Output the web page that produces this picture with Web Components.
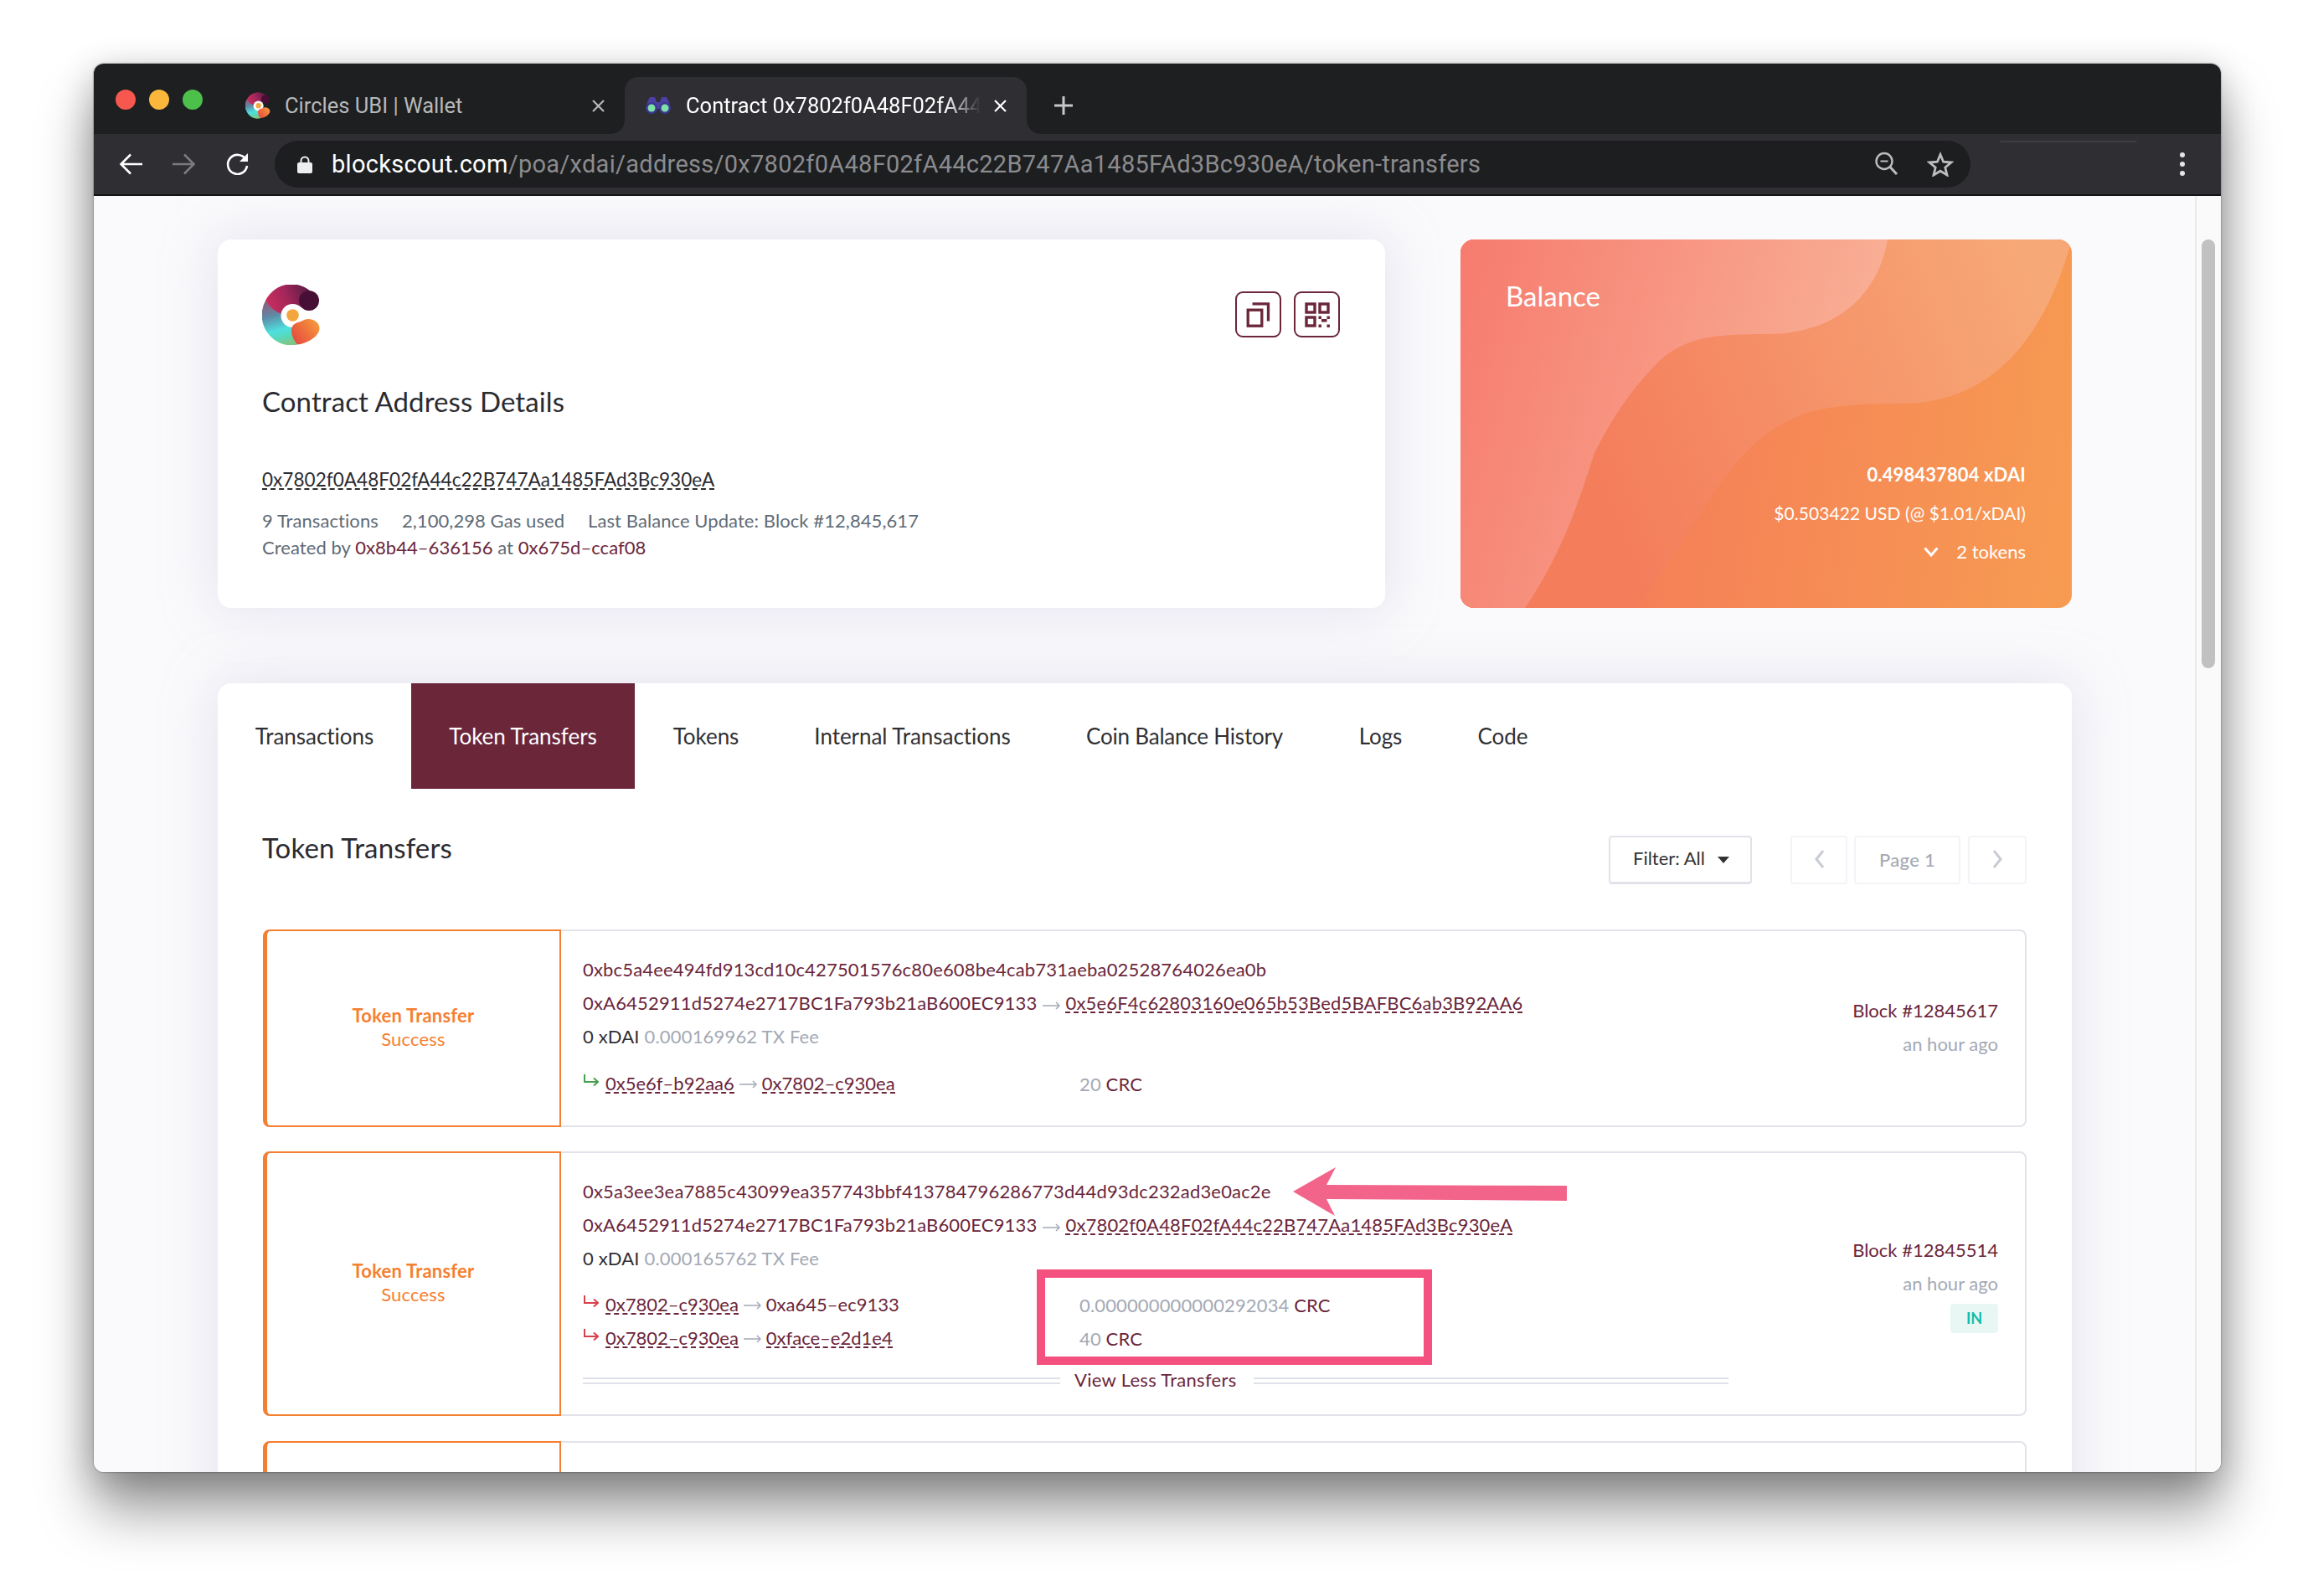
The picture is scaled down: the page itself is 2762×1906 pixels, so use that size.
<!doctype html>
<html>
<head>
<meta charset="utf-8">
<title>Contract details</title>
<style>
  html, body { margin: 0; background: #fff; }
  body {
    width: 2762px;
    height: 1906px;
    box-sizing: border-box;
    padding: 76px 0 0 112px;
    overflow: hidden;
    font: 22px Lato, "Noto Sans", sans-serif;
    color: #333;
  }
</style>
</head>
<body>
<browser-window>
  <browser-tab slot="tabs">
    <circles-logo slot="icon" style="width:30px;height:32px"></circles-logo>
    Circles UBI | Wallet
  </browser-tab>
  <browser-tab slot="tabs" active>
    <binoculars-icon slot="icon"></binoculars-icon>
    Contract 0x7802f0A48F02fA44c22B747Aa1485FAd3Bc930eA
  </browser-tab>

  <address-card></address-card>
  <balance-card></balance-card>

  <transfers-panel slot="panel">
    <transfer-row block="Block #12845617" age="an hour ago">
      <tx-line><x-link>0xbc5a4ee494fd913cd10c427501576c80e608be4cab731aeba02528764026ea0b</x-link></tx-line>
      <tx-line><x-link>0xA6452911d5274e2717BC1Fa793b21aB600EC9133</x-link><x-arrow wide></x-arrow><x-link dashed>0x5e6F4c62803160e065b53Bed5BAFBC6ab3B92AA6</x-link></tx-line>
      <tx-line>0 xDAI <x-muted>0.000169962 TX Fee</x-muted></tx-line>
      <token-line dir="in" first>
        <x-link dashed>0x5e6f–b92aa6</x-link><x-arrow></x-arrow><x-link dashed>0x7802–c930ea</x-link>
        <span slot="amount"><x-muted>20</x-muted> <x-link>CRC</x-link></span>
      </token-line>
    </transfer-row>

    <transfer-row class="open" block="Block #12845514" age="an hour ago" badge="IN">
      <tx-line><x-link>0x5a3ee3ea7885c43099ea357743bbf413784796286773d44d93dc232ad3e0ac2e</x-link></tx-line>
      <tx-line><x-link>0xA6452911d5274e2717BC1Fa793b21aB600EC9133</x-link><x-arrow wide></x-arrow><x-link dashed>0x7802f0A48F02fA44c22B747Aa1485FAd3Bc930eA</x-link></tx-line>
      <tx-line>0 xDAI <x-muted>0.000165762 TX Fee</x-muted></tx-line>
      <token-line dir="out" first style="margin-top:15px">
        <x-link dashed>0x7802–c930ea</x-link><x-arrow></x-arrow><x-link>0xa645–ec9133</x-link>
        <span slot="amount"><x-muted>0.000000000000292034</x-muted> <x-link>CRC</x-link></span>
      </token-line>
      <token-line dir="out">
        <x-link dashed>0x7802–c930ea</x-link><x-arrow></x-arrow><x-link dashed>0xface–e2d1e4</x-link>
        <span slot="amount"><x-muted>40</x-muted> <x-link>CRC</x-link></span>
      </token-line>
      <view-less></view-less>
    </transfer-row>

    <transfer-row></transfer-row>
  </transfers-panel>

  <pink-marks slot="marks"></pink-marks>
</browser-window>

<script>
const MAROON = '#6b263a';

function tpl(html) {
  const t = document.createElement('template');
  t.innerHTML = html;
  return t;
}

class Base extends HTMLElement {
  constructor() {
    super();
    this.attachShadow({ mode: 'open' });
    this.shadowRoot.appendChild(this.constructor.template.content.cloneNode(true));
  }
}

class BrowserWindow extends Base {
  static template = tpl(`
    <style>
      :host {
        display: block;
        position: relative;
        width: 2540px;
        height: 1682px;
        border-radius: 12px;
        box-shadow: 0 46px 66px rgba(0,0,0,.4), 0 8px 40px rgba(0,0,0,.22), 0 0 2px rgba(0,0,0,.6);
      }
      .frame {
        display: flex;
        flex-direction: column;
        height: 100%;
        border-radius: 12px;
        overflow: hidden;
        font-family: Roboto, "Liberation Sans", sans-serif;
      }
      .strip { display: flex; height: 84px; flex: none; background: #1e1f21; }
      .lights { display: flex; gap: 16px; padding: 31px 0 0 26px; width: 168px; box-sizing: border-box; }
      .lights i { width: 24px; height: 24px; border-radius: 50%; }
      .tabs { display: flex; align-items: flex-end; }
      .plus { align-self: flex-end; height: 68px; width: 88px; display: flex; align-items: center; justify-content: center; }
      .bar {
        display: flex; flex: none; height: 72px; align-items: center;
        background: #2f2e33; border-bottom: 2px solid #141416;
        padding-left: 12px;
      }
      .nav { width: 64px; display: flex; justify-content: center; }
      .omni {
        display: flex; align-items: center; width: 2025px; height: 56px; margin-left: 12px;
        box-sizing: border-box; padding-left: 27px;
        border-radius: 28px; background: #1d1e20;
        font-size: 29px; letter-spacing: .28px; color: #8b8b8e; white-space: nowrap;
      }
      .omni b { font-weight: 400; color: #fff; }
      .omni .url { margin-left: 23px; flex: 1; }
      .omni svg.z { margin-right: 33px; }
      .omni svg.s { margin-right: 20px; }
      .sliver { align-self: flex-start; width: 164px; height: 2px; margin: 8px 0 0 35px; background: #3d3d42; border-radius: 2px 2px 0 0; }
      .dots { margin-left: 51px; display: flex; flex-direction: column; gap: 5px; }
      .dots i { width: 6px; height: 6px; border-radius: 50%; background: #e6e6e6; }
      .view { flex: 1; display: flex; min-height: 0; background: #fafafc; }
      main { flex: 1; min-width: 0; padding: 52px 0 0 148px; overflow: hidden; font-family: Lato, "Noto Sans", sans-serif; }
      .top { display: flex; gap: 90px; }
      .scroll { flex: none; width: 31px; box-sizing: border-box; border-left: 2px solid #e9e9eb; background: #fafafa; padding: 52px 0 0 6px; }
      .thumb { width: 16px; height: 512px; border-radius: 8px; background: #c1c1c1; }
    </style>
    <div class="frame">
      <div class="strip">
        <div class="lights">
          <i style="background:#f6584f"></i><i style="background:#fbb63c"></i><i style="background:#4cc04a"></i>
        </div>
        <div class="tabs"><slot name="tabs"></slot></div>
        <div class="plus">
          <svg width="24" height="24" viewBox="0 0 24 24"><path d="M12 1V23M1 12H23" stroke="#c8c8ca" stroke-width="3"/></svg>
        </div>
      </div>
      <div class="bar">
        <div class="nav"><svg width="28" height="26" viewBox="0 0 28 26" fill="none" stroke="#fff" stroke-width="2.6"><path d="M28 13H3M14 1.5L2.5 13L14 24.5"/></svg></div>
        <div class="nav"><svg width="28" height="26" viewBox="0 0 28 26" fill="none" stroke="#7b7b7e" stroke-width="2.6"><path d="M0 13H25M14 1.5L25.5 13L14 24.5"/></svg></div>
        <div class="nav"><svg width="28" height="26" viewBox="0 0 28 26" fill="none"><path d="M23.5 7.5A11.5 11.5 0 1 0 25 15" stroke="#fff" stroke-width="2.6"/><path d="M26 0V10H16Z" fill="#fff"/></svg></div>
        <div class="omni">
          <svg width="18" height="21" viewBox="0 0 18 21"><path d="M4.5 9V6a4.5 4.5 0 0 1 9 0V9" fill="none" stroke="#eee" stroke-width="2"/><rect y="8" width="18" height="13" rx="2" fill="#eee"/></svg>
          <span class="url"><b>blockscout.com</b>/poa/xdai/address/0x7802f0A48F02fA44c22B747Aa1485FAd3Bc930eA/token-transfers</span>
          <svg class="z" width="30" height="30" viewBox="0 0 30 30" fill="none" stroke="#bdbdbd"><circle cx="12" cy="11.5" r="9.5" stroke-width="2.4"/><path d="M7.5 11.5H16.5" stroke-width="2"/><path d="M19 18.5L27 27" stroke-width="3"/></svg>
          <svg class="s" width="32" height="30" viewBox="0 0 32 30" fill="none" stroke="#bdbdbd" stroke-width="2.8"><path d="M16 3.5L19.6 12.2L29 13L21.8 19L24 28L16 23.2L8 28L10.2 19L3 13L12.4 12.2Z" stroke-linejoin="miter"/></svg>
        </div>
        <div class="sliver"></div>
        <div class="dots"><i></i><i></i><i></i></div>
      </div>
      <div class="view">
        <main>
          <div class="top"><slot></slot></div>
          <slot name="panel"></slot>
        </main>
        <div class="scroll"><div class="thumb"></div></div>
      </div>
    </div>
    <slot name="marks"></slot>
  `);
}

class BrowserTab extends Base {
  static template = tpl(`
    <style>
      :host {
        display: flex; align-items: center; position: relative;
        width: 466px; height: 68px; box-sizing: border-box; padding-left: 13px;
        font-size: 25.5px; color: #b7b8ba; white-space: nowrap;
      }
      :host([active]) {
        width: 480px; padding-left: 24px; color: #fff; background: #2f2e33;
        border-radius: 16px 16px 0 0;
      }
      :host([active])::before, :host([active])::after {
        content: ""; position: absolute; bottom: 0; width: 16px; height: 16px;
      }
      :host([active])::before { left: -16px; background: radial-gradient(circle at 0 0, transparent 15.5px, #2f2e33 16px); }
      :host([active])::after { right: -16px; background: radial-gradient(circle at 100% 0, transparent 15.5px, #2f2e33 16px); }
      .text { flex: 1; min-width: 0; overflow: hidden; margin-left: 17px; }
      :host([active]) .text { -webkit-mask-image: linear-gradient(to right, #000 88%, transparent 100%); mask-image: linear-gradient(to right, #000 88%, transparent 100%); }
      svg { flex: none; margin: 0 24px 0 16px; }
    </style>
    <slot name="icon"></slot>
    <div class="text"><slot></slot></div>
    <svg width="15" height="15" viewBox="0 0 15 15"><path d="M1 1L14 14M14 1L1 14" stroke="currentColor" stroke-width="2.2"/></svg>
  `);
}

class CirclesLogo extends Base {
  static template = tpl(`
    <style>:host { display: block; flex: none; width: 70px; height: 72px; } svg { display: block; width: 100%; height: 100%; }</style>
    <svg viewBox="0 0 70 72">
      <defs>
        <linearGradient id="mg" x1="4" y1="26" x2="62" y2="4" gradientUnits="userSpaceOnUse">
          <stop offset="0" stop-color="#cf2f5f"/><stop offset=".45" stop-color="#a3265a"/><stop offset="1" stop-color="#46193f"/>
        </linearGradient>
        <linearGradient id="tl" x1="8" y1="22" x2="22" y2="72" gradientUnits="userSpaceOnUse">
          <stop offset="0" stop-color="#8c5f83"/><stop offset=".3" stop-color="#5e8aa6"/><stop offset=".66" stop-color="#4ee0df"/><stop offset=".84" stop-color="#58d8bb"/><stop offset="1" stop-color="#7cc887"/>
        </linearGradient>
        <linearGradient id="or" x1="36" y1="66" x2="66" y2="44" gradientUnits="userSpaceOnUse">
          <stop offset="0" stop-color="#e6493e"/><stop offset="1" stop-color="#f6993c"/>
        </linearGradient>
      </defs>
      <path d="M4.5 18A35 36 0 0 0 42 71.500L44 50L34 34Z" fill="url(#tl)"/>
      <path d="M4.5 18A35 36 0 0 1 60 10L56 30L44 26L32 37C20 35 10 30 4.5 18Z" fill="url(#mg)"/>
      <circle cx="56" cy="19" r="12" fill="#470f35"/>
      <circle cx="36.5" cy="37" r="14" fill="#fff"/>
      <circle cx="36.5" cy="36.5" r="7.3" fill="#f3a53e"/>
      <path d="M35 54C35 47 42 45 46 44C50 42 52 41 55 41C63 41 69 46 68.500 53C67 62 55 70 42 71.500C38 66 35 61 35 54Z" fill="url(#or)"/>
    </svg>
  `);
}

class BinocularsIcon extends Base {
  static template = tpl(`
    <style>:host { display: block; flex: none; width: 32px; height: 20px; } svg { display: block; }</style>
    <svg width="32" height="20" viewBox="0 0 32 20">
      <path d="M3 6L6 0H12L14 6H18L20 0H26L29 6L31 14H1Z" fill="#4d3fa6"/>
      <circle cx="8" cy="13" r="7" fill="#39388f"/><circle cx="24" cy="13" r="7" fill="#39388f"/>
      <circle cx="8" cy="13" r="4.500" fill="#7fe0a8"/><circle cx="24" cy="13" r="4.500" fill="#7fe0a8"/>
    </svg>
  `);
}

class IconButton extends Base {
  static template = tpl(`
    <style>
      :host {
        display: flex; align-items: center; justify-content: center; flex: none;
        width: 55px; height: 55px; box-sizing: border-box;
        border: 2px solid ${MAROON}; border-radius: 9px; color: ${MAROON};
      }
    </style>
    <slot></slot>
  `);
}

class AddressCard extends Base {
  static template = tpl(`
    <style>
      :host {
        display: block; flex: none; width: 1394px; height: 440px; box-sizing: border-box;
        padding: 54px 53px 0; border-radius: 16px; background: #fff;
        box-shadow: 0 0 60px rgba(202,199,226,.5);
      }
      .head { display: flex; justify-content: space-between; height: 72px; }
      .btns { display: flex; gap: 15px; padding: 8px 1px 0 0; }
      h1 { margin: 47px 0 0; font-weight: 400; font-size: 33px; line-height: 40px; letter-spacing: .1px; color: #2b2b30; }
      .addr {
        display: inline-block; margin-top: 64px; font-size: 22.500px; letter-spacing: .05px; line-height: 20px; color: #2b2b30;
        border-bottom: 2px dashed #2b2b30;
      }
      .stats { display: flex; gap: 28px; margin-top: 20px; line-height: 32px; letter-spacing: .08px; color: #5f6b76; }
      .created { line-height: 32px; letter-spacing: .06px; color: #5f6b76; }
      a { color: ${MAROON}; text-decoration: none; }
      svg { display: block; }
    </style>
    <div class="head">
      <circles-logo></circles-logo>
      <div class="btns">
        <icon-button>
          <svg width="32" height="32" viewBox="0 0 32 32" fill="none" stroke="${MAROON}" stroke-width="3.300"><rect x="3.200" y="10.200" width="16.600" height="19"/><path d="M8.500 2.900H27.500V23.500"/></svg>
        </icon-button>
        <icon-button>
          <svg width="30" height="30" viewBox="0 0 30 30" fill="none" stroke="${MAROON}" stroke-width="3.400">
            <rect x="2" y="2" width="10" height="10"/><rect x="18" y="2" width="10" height="10"/><rect x="2" y="18" width="10" height="10"/>
            <path d="M16.500 16.500h3.400v3.400h-3.400zM26.500 16.500h3.400v3.400h-3.400zM20 20h6.500v3.400H20zM16.500 26.500h3.400v3.400h-3.400zM26.500 26.500h3.400v3.400h-3.400z" fill="${MAROON}" stroke="none"/>
          </svg>
        </icon-button>
      </div>
    </div>
    <h1>Contract Address Details</h1>
    <div class="addr">0x7802f0A48F02fA44c22B747Aa1485FAd3Bc930eA</div>
    <div class="stats"><span>9 Transactions</span><span>2,100,298 Gas used</span><span>Last Balance Update: Block #12,845,617</span></div>
    <div class="created">Created by <a>0x8b44–636156</a> at <a>0x675d–ccaf08</a></div>
  `);
}

class BalanceCard extends Base {
  static template = tpl(`
    <style>
      :host {
        display: flex; flex-direction: column; justify-content: space-between; flex: none; position: relative;
        width: 730px; height: 440px; box-sizing: border-box; padding: 47px 55px 44px;
        border-radius: 16px; overflow: hidden; color: #fff;
      }
      .bg { position: absolute; inset: 0; z-index: 0; }
      .title, .right { position: relative; }
      .title { font-size: 33px; line-height: 40px; margin-left: -1px; }
      .right { text-align: right; line-height: 46px; }
      .sum { font-weight: 700; letter-spacing: .12px; }
      .usd { font-size: 21px; letter-spacing: .06px; }
      .tok { display: flex; justify-content: flex-end; align-items: center; gap: 21px; }
    </style>
    <svg class="bg" width="730" height="440" viewBox="0 0 730 440">
      <defs>
        <linearGradient id="c" x1="200" y1="300" x2="730" y2="380" gradientUnits="userSpaceOnUse"><stop offset="0" stop-color="#f57e58"/><stop offset="1" stop-color="#f79b52"/></linearGradient>
        <linearGradient id="b" x1="170" y1="300" x2="700" y2="100" gradientUnits="userSpaceOnUse"><stop offset="0" stop-color="#f47d5c"/><stop offset="1" stop-color="#f7a877"/></linearGradient>
        <linearGradient id="a" x1="0" y1="0" x2="510" y2="150" gradientUnits="userSpaceOnUse"><stop offset="0" stop-color="#f67b6e"/><stop offset="1" stop-color="#f9b297"/></linearGradient>
      </defs>
      <rect width="730" height="440" fill="url(#c)"/>
      <path d="M0 0H730C700 110 640 196 526 196C480 196 445 198 414 207C370 222 340 250 315 285C280 335 243 395 213 440H0Z" fill="url(#b)"/>
      <path d="M0 0H510C500 60 455 113 365 113C300 113 262 116 228 155C195 190 175 225 160 255C145 300 125 370 77 440H0Z" fill="url(#a)"/>
    </svg>
    <div class="title">Balance</div>
    <div class="right">
      <div class="sum">0.498437804 xDAI</div>
      <div class="usd">$0.503422 USD (@ $1.01/xDAI)</div>
      <div class="tok">
        <svg width="18" height="12" viewBox="0 0 18 12" fill="none" stroke="#fff" stroke-width="3"><path d="M1.500 1.500L9 10L16.500 1.500"/></svg>
        <span>2 tokens</span>
      </div>
    </div>
  `);
}

class TransfersPanel extends Base {
  static template = tpl(`
    <style>
      :host {
        display: block; width: 2214px; margin-top: 90px; padding: 0 54px;
        box-sizing: border-box; border-radius: 16px 16px 0 0; background: #fff;
        box-shadow: 0 0 60px rgba(202,199,226,.5);
      }
      nav { display: flex; height: 126px; margin: 0 -54px; }
      .head { display: flex; justify-content: space-between; height: 58px; margin-top: 56px; }
      h2 { margin: -1px 0 0 -1px; font-weight: 400; font-size: 33px; line-height: 30px; letter-spacing: .15px; color: #2b2b30; }
      .tools { display: flex; font-size: 22px; }
      .filter {
        display: flex; align-items: center; gap: 15px; width: 171px; box-sizing: border-box; padding: 0 0 4px 27px;
        border: 2px solid #e2e2ea; border-bottom-width: 3px; border-radius: 4px; margin-right: 46px; color: #333;
      }
      .filter i { width: 0; height: 0; border: 7px solid transparent; border-top: 8px solid #333; border-bottom: 0; margin-top: 5px; }
      .pg {
        display: flex; align-items: center; justify-content: center; box-sizing: border-box; padding-bottom: 2px;
        border: 2px solid #f3f3f8; border-radius: 4px; color: #a3a9b5; font-weight: 500; letter-spacing: .3px;
      }
      .rows { margin-top: 54px; }
    </style>
    <nav>
      <tab-item style="width:231px">Transactions</tab-item>
      <tab-item style="width:267px;margin-left:0" active>Token Transfers</tab-item>
      <tab-item style="width:170px">Tokens</tab-item>
      <tab-item style="width:323px">Internal Transactions</tab-item>
      <tab-item style="width:327px;letter-spacing:-.2px">Coin Balance History</tab-item>
      <tab-item style="width:141px">Logs</tab-item>
      <tab-item style="width:151px">Code</tab-item>
    </nav>
    <div class="head">
      <h2>Token Transfers</h2>
      <div class="tools">
        <div class="filter">Filter: All <i></i></div>
        <div class="pg" style="width:68px;margin-right:8px">
          <svg width="13" height="24" viewBox="0 0 13 24" fill="none" stroke="#c8ccd4" stroke-width="3"><path d="M11 2L3 12L11 22"/></svg>
        </div>
        <div class="pg" style="width:127px;margin-right:9px">Page 1</div>
        <div class="pg" style="width:70px">
          <svg width="13" height="24" viewBox="0 0 13 24" fill="none" stroke="#c8ccd4" stroke-width="3"><path d="M2 2L10 12L2 22"/></svg>
        </div>
      </div>
    </div>
    <div class="rows"><slot></slot></div>
  `);
}

class TabItem extends Base {
  static template = tpl(`
    <style>
      :host { display: flex; align-items: center; justify-content: center; flex: none; font-size: 26px; letter-spacing: -.04px; color: #2f2f33; }
      :host([active]) { background: ${MAROON}; color: #fff; }
    </style>
    <slot></slot>
  `);
}

class TransferRow extends Base {
  static template = tpl(`
    <style>
      :host {
        display: flex; box-sizing: border-box; min-height: 236px; margin-top: 28px;
        border: 2px solid #e2e2ea; border-radius: 8px;
      }
      :host(:first-child) { margin-top: 0; }
      :host(:last-child) { margin-top: 30px; }
      :host(.open) { margin-top: 29px; }
      .kind {
        display: flex; flex-direction: column; justify-content: center; align-items: center; flex: none;
        width: 356px; box-sizing: border-box; margin: -2px 0 -2px -2px; padding-bottom: 3px;
        border: 2px solid #f57f31; border-left-width: 5px; border-radius: 8px 0 0 8px;
        line-height: 28px; letter-spacing: .2px; color: #f57f31;
      }
      .kind b { font-weight: 700; }
      .main { flex: 1; min-width: 0; padding: 27px 0 22px 26px; }
      .side {
        display: flex; flex-direction: column; justify-content: center; align-items: flex-end; flex: none;
        padding: 0 32px 2px 0; line-height: 40px; color: #a3a9b5;
      }
      .side .blk { color: ${MAROON}; }
      .side .badge {
        display: none; width: 57px; height: 35px; margin-top: 4px; border-radius: 4px;
        background: #e8f7f3; color: #15bba6; font-size: 18px; font-weight: 700; line-height: 35px; text-align: center;
      }
      .empty { visibility: hidden; }
    </style>
    <div class="kind"><div class="label"><b>Token Transfer</b></div><div class="label">Success</div></div>
    <div class="main"><slot></slot></div>
    <div class="side"><div class="blk"></div><div class="age"></div><div class="badge"></div></div>
  `);

  connectedCallback() {
    const root = this.shadowRoot;
    root.querySelector('.blk').textContent = this.getAttribute('block') || '';
    root.querySelector('.age').textContent = this.getAttribute('age') || '';
    const badge = this.getAttribute('badge');
    if (badge) {
      const el = root.querySelector('.badge');
      el.textContent = badge;
      el.style.display = 'block';
    }
    if (!this.hasAttribute('block')) {
      root.querySelector('.kind').querySelectorAll('.label').forEach(l => l.classList.add('empty'));
    }
  }
}

class TxLine extends Base {
  static template = tpl(`
    <style>:host { display: block; height: 40px; line-height: 38px; letter-spacing: .18px; white-space: nowrap; color: #2f2f33; }</style>
    <slot></slot>
  `);
}

class TokenLine extends Base {
  static template = tpl(`
    <style>
      :host { display: flex; height: 40px; align-items: center; white-space: nowrap; padding-bottom: 2px; box-sizing: border-box; }
      :host([first]) { margin-top: 16px; }
      .from { display: flex; align-items: center; width: 593px; }
      svg { margin: -8px 8px 0 1px; }
      ::slotted([slot=amount]) { letter-spacing: .14px; }
    </style>
    <div class="from">
      <svg width="18" height="14" viewBox="0 0 18 14" fill="none" stroke-width="2"><path d="M1 0V9H17M12 4.500L17 9L12 13.500"/></svg>
      <slot></slot>
    </div>
    <slot name="amount"></slot>
  `);

  connectedCallback() {
    const out = this.getAttribute('dir') === 'out';
    this.shadowRoot.querySelector('svg').setAttribute('stroke', out ? '#d8404c' : '#47a04e');
  }
}

class XLink extends Base {
  static template = tpl(`
    <style>
      :host { display: inline-block; color: ${MAROON}; line-height: 20px; }
      :host([dashed]) { border-bottom: 2px dashed ${MAROON}; margin-bottom: -2px; }
    </style>
    <slot></slot>
  `);
}

class XMuted extends Base {
  static template = tpl(`<style>:host { color: #a3a9b5; }</style><slot></slot>`);
}

class XArrow extends Base {
  static template = tpl(`
    <style>
      :host { display: inline-block; width: 21px; margin: 0 6px; line-height: 0; vertical-align: middle; }
      :host([wide]) { margin: 0 6px 0 7px; }
      svg { display: block; }
    </style>
    <svg width="21" height="12" viewBox="0 0 21 12" fill="none" stroke="#a3a9b5" stroke-width="1.500"><path d="M0 7H20M16 3L20 7L16 11"/></svg>
  `);
}

class ViewLess extends Base {
  static template = tpl(`
    <style>
      :host { display: flex; align-items: center; width: 1368px; height: 40px; margin-top: 8px; color: ${MAROON}; }
      i { display: block; height: 4px; border-top: 2px solid #dfe2e8; border-bottom: 2px solid #dfe2e8; margin-top: 4px; }
      .l { flex: none; width: 570px; }
      .r { flex: 1; }
      span { margin: 0 20px 0 17px; letter-spacing: .3px; white-space: nowrap; }
    </style>
    <i class="l"></i><span>View Less Transfers</span><i class="r"></i>
  `);
}

class PinkMarks extends Base {
  static template = tpl(`
    <style>
      :host { display: block; position: absolute; inset: 0; pointer-events: none; }
      .box { position: absolute; left: 1126px; top: 1440px; width: 472px; height: 114px; box-sizing: border-box; border: 10px solid #f45180; }
      svg { position: absolute; left: 1428px; top: 1314px; }
    </style>
    <svg width="336" height="66" viewBox="0 0 336 66"><path d="M4 33L55 4L44 25L331 26V44L44 42L54 62Z" fill="#f2648a"/></svg>
    <div class="box"></div>
  `);
}

const els = {
  'browser-window': BrowserWindow, 'browser-tab': BrowserTab, 'circles-logo': CirclesLogo,
  'binoculars-icon': BinocularsIcon, 'icon-button': IconButton, 'address-card': AddressCard,
  'balance-card': BalanceCard, 'transfers-panel': TransfersPanel, 'tab-item': TabItem,
  'transfer-row': TransferRow, 'tx-line': TxLine, 'token-line': TokenLine, 'x-link': XLink,
  'x-muted': XMuted, 'x-arrow': XArrow, 'view-less': ViewLess, 'pink-marks': PinkMarks
};
for (const name in els) {
  customElements.define(name, els[name]);
}
</script>
</body>
</html>
